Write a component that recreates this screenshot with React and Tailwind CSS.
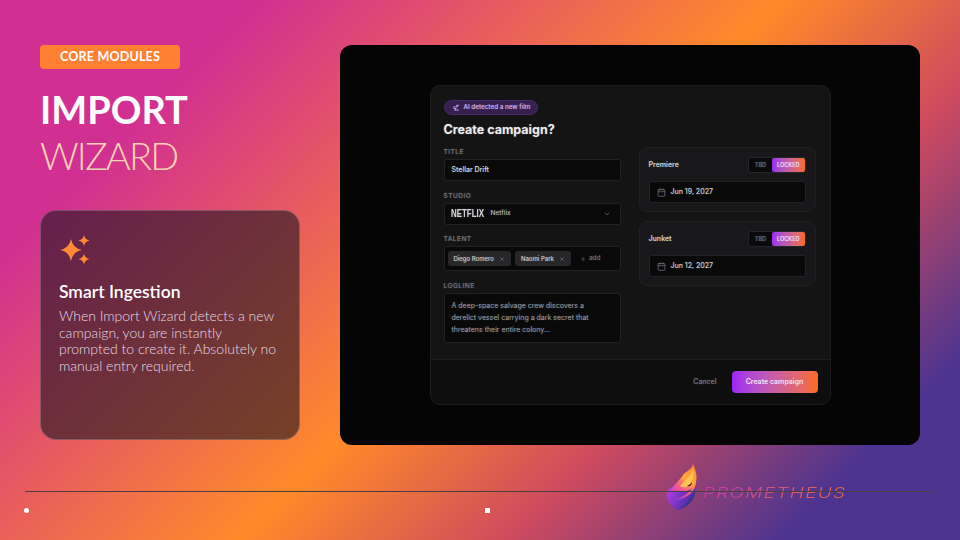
import React from 'react';
import { Calendar, ChevronDown, Plus, X } from 'lucide-react';

const Sparkle = ({ cx, cy, r }) => {
  const k = r * 0.16;
  return (
    <path
      d={`M${cx} ${cy - r}Q${cx + k} ${cy - k} ${cx + r} ${cy}Q${cx + k} ${cy + k} ${cx} ${cy + r}Q${cx - k} ${cy + k} ${cx - r} ${cy}Q${cx - k} ${cy - k} ${cx} ${cy - r}Z`}
    />
  );
};

const Field = ({ label, children }) => (
  <div className="flex flex-col gap-[3px]">
    <div className="text-[6.5px] leading-[8px] tracking-[0.5px] font-medium text-[#71717a]">{label}</div>
    {children}
  </div>
);

const Chip = ({ name }) => (
  <div className="flex items-center gap-[5px] h-[15px] px-[6px] rounded-[3px] bg-[#27272a] text-[6px] font-medium text-[#c8c8cc]">
    {name}
    <X size={6} className="text-[#8a8a90]" />
  </div>
);

const DateCard = ({ label, date }) => (
  <div className="flex flex-col gap-[8px] h-[65px] px-[9px] pt-[9px] rounded-[8px] border border-[#212124] bg-[#18181a]">
    <div className="flex items-center justify-between">
      <span className="text-[7px] font-semibold text-[#c8c8cc]">{label}</span>
      <div className="flex h-[16px] items-stretch rounded-[3px] border border-[#26262a] bg-[#0a0a0b] text-[5.5px] font-semibold">
        <span className="flex items-center px-[6px] text-[#5f5f66]">TBD</span>
        <span className="flex items-center px-[5px] text-[#f3d9f5] bg-gradient-to-r from-[#9a2bf0] to-[#fb6a12] rounded-[2px]">LOCKED</span>
      </div>
    </div>
    <div className="flex items-center gap-[5px] h-[22px] px-[7px] rounded-[3px] border border-[#222225] bg-[#09090a]">
      <Calendar size={9} className="text-[#71717a]" />
      <span className="text-[7px] font-medium text-[#c4c4c8]">{date}</span>
    </div>
  </div>
);

const Modal = () => (
  <div className="w-[401px] h-[320px] flex flex-col rounded-[10px] border border-[#1c1c1e] bg-[#141415] antialiased [text-shadow:0_0_1.5px_rgba(190,190,195,0.4)] overflow-hidden font-[Inter,sans-serif]">
    <div className="flex-1 flex flex-col pl-[13px] pr-[13px] pt-[14px]">
      <div className="self-start flex items-center gap-[4px] h-[15px] px-[7px] rounded-full bg-[#35204f] border border-[#46296a] text-[6.3px] font-medium text-[#d8b4fe]">
        <svg width="8" height="8" viewBox="0 0 24 24" fill="none" stroke="currentColor" strokeWidth="2.5"><path d="M4 14h8l-4 6M12 4h8l-6 6M3 9h12M9 18h12" /></svg>
        AI detected a new film
      </div>
      <div className="mt-[6px] text-[12.5px] leading-[18px] font-bold text-[#ececec]">Create campaign?</div>
      <div className="flex gap-[18px] mt-[9px]">
        <div className="w-[177px] flex flex-col gap-[10.5px]">
          <Field label="TITLE">
            <div className="flex items-center h-[22px] px-[7px] rounded-[3px] border border-[#222225] bg-[#09090a] text-[7px] font-medium text-[#d4d4d8]">Stellar Drift</div>
          </Field>
          <Field label="STUDIO">
            <div className="flex items-center justify-between h-[22px] px-[6px] rounded-[3px] border border-[#222225] bg-[#09090a]">
              <div className="flex items-center gap-[6px]">
                <span className="w-[34px] text-[11px] font-bold text-[#d4d4d8] scale-x-[0.72] origin-left whitespace-nowrap font-['Liberation_Sans',sans-serif]">NETFLIX</span>
                <span className="text-[6.5px] font-medium text-[#a8a8ae]">Netflix</span>
              </div>
              <ChevronDown size={8} className="text-[#71717a] mr-[3px]" />
            </div>
          </Field>
          <Field label="TALENT">
            <div className="flex items-center gap-[4px] h-[25px] px-[3px] rounded-[3px] border border-[#222225] bg-[#09090a]">
              <Chip name="Diego Romero" />
              <Chip name="Naomi Park" />
              <div className="flex items-center gap-[3px] ml-[5px] text-[6.5px] text-[#71717a]">
                <Plus size={6} />add
              </div>
            </div>
          </Field>
          <Field label="LOGLINE">
            <div className="h-[50px] pl-[7px] pr-[12px] pt-[6px] rounded-[3px] border border-[#222225] bg-[#09090a] text-[7px] leading-[12px] text-[#96969c]">
              A deep-space salvage crew discovers a derelict vessel carrying a dark secret that threatens their entire colony...
            </div>
          </Field>
        </div>
        <div className="w-[177px] flex flex-col gap-[9px] mt-[-1px]">
          <DateCard label="Premiere" date="Jun 19, 2027" />
          <DateCard label="Junket" date="Jun 12, 2027" />
        </div>
      </div>
    </div>
    <div className="h-[45px] flex items-center justify-end gap-[15px] px-[12px] border-t border-[#1e1e20] bg-[#0e0e0f]">
      <span className="text-[7px] font-medium text-[#6b6b72]">Cancel</span>
      <div className="flex items-center justify-center w-[86px] h-[22px] rounded-[4px] bg-gradient-to-r from-[#a021f5] to-[#fb6a12] text-[7px] font-semibold text-[#f3d9f5]">Create campaign</div>
    </div>
  </div>
);

const Logo = () => (
  <div className="flex items-start">
    <svg width="50" height="55" viewBox="0 0 50 55">
      <defs>
        <linearGradient id="flameTop" x1="0.8" y1="0" x2="0" y2="1">
          <stop offset="0" stopColor="#ff8a2e" />
          <stop offset="0.4" stopColor="#ffa83e" />
          <stop offset="0.7" stopColor="#f6588c" />
          <stop offset="1" stopColor="#c23cd8" />
        </linearGradient>
        <linearGradient id="flameBase" x1="0" y1="0" x2="1" y2="0.6">
          <stop offset="0" stopColor="#cc44ee" />
          <stop offset="0.6" stopColor="#7a35c8" />
          <stop offset="1" stopColor="#3f2f9c" />
        </linearGradient>
        <linearGradient id="flameMid" x1="1" y1="0" x2="0" y2="1">
          <stop offset="0" stopColor="#ff9a3c" />
          <stop offset="0.5" stopColor="#f0558c" />
          <stop offset="1" stopColor="#8a35c8" />
        </linearGradient>
      </defs>
      <path d="M18 50C9 46 5 38 7 32C10 26 18 24 24 17C30 22 36 20 35.5 26C35 36 28 46 18 50Z" fill="url(#flameBase)" />
      <path d="M9 32C14 25 20 20 23 15C27 10 32 10 33 4C37 13 38 20 34 27C27 34 16 30 9 32Z" fill="url(#flameTop)" />
      <path d="M20 26C26 20 31 15 33 9C35 15 33 22 28 26C25 28 22 27 20 26Z" fill="#ffc452" />
      <path d="M12 40C22 38 31 33 36 22C36 31 27 40 12 40Z" fill="url(#flameMid)" />
      <path d="M18 50C26 46 32 39 35 29C36 38 29 47 18 50Z" fill="#33348f" />
      <path d="M27 26C29 25 31 24 32 22C32 25 30 27 27 26Z" fill="#35182c" />
    </svg>
    <span className="mt-[26px] ml-[-7px] w-[112px] text-[15px] leading-[14px] italic font-light tracking-[1px] whitespace-nowrap scale-x-[1.27] origin-left bg-gradient-to-r from-[#c23aa8] to-[#e8653f] bg-clip-text text-transparent font-[Inter,sans-serif]">PROMETHEUS</span>
  </div>
);

export default function App() {
  return (
    <div className="relative w-[960px] h-[540px] overflow-hidden font-[Lato,sans-serif] bg-[linear-gradient(135deg,#d12f92_0%,#d12f92_17%,#ff8a2a_52%,#ce4a5e_70%,#4c3490_88%,#4c3490_100%)]">
      <div className="flex h-[445px] pt-[45px] pl-[40px] pr-[40px] justify-between">
        <div className="w-[260px] flex flex-col">
          <div className="flex items-center justify-center w-[140px] h-[24px] rounded-[4px] bg-[#ff8033] text-[12.5px] font-bold text-white tracking-[0.2px]">CORE MODULES</div>
          <div className="mt-[17px] text-[38px] leading-[46px] font-bold text-white">IMPORT</div>
          <div className="text-[38px] leading-[47px] font-light tracking-[-1.8px] text-[#fdd4b4]">WIZARD</div>
          <div className="mt-[31px] w-[260px] h-[230px] px-[18px] pt-[24px] rounded-[16px] border border-white/20 bg-[#1e1620]/60">
            <svg width="32" height="32" viewBox="0 0 32 32" fill="#ff8a33">
              <Sparkle cx={12} cy={15} r={11} />
              <Sparkle cx={25} cy={5.5} r={5.5} />
              <Sparkle cx={25} cy={24} r={5.5} />
            </svg>
            <div className="mt-[13px] text-[17.5px] leading-[24px] font-semibold text-white">Smart Ingestion</div>
            <div className="mt-[4px] text-[14px] leading-[16.7px] font-light text-[#e6dbe6]">When Import Wizard detects a new campaign, you are instantly prompted to create it. Absolutely no manual entry required.</div>
          </div>
        </div>
        <div className="w-[580px] h-[400px] flex items-center justify-center rounded-[12px] bg-[#050505]">
          <Modal />
        </div>
      </div>
      {/* footer logo, rule and slide markers */}
      <div className="absolute left-[660px] top-[460px]"><Logo /></div>
      <div className="absolute left-[25px] right-[24px] top-[491px] h-px bg-[#4a3f40]" />
      <div className="absolute left-[24px] top-[508px] w-[5px] h-[5px] rounded-full bg-white" />
      <div className="absolute left-[485px] top-[508px] w-[5px] h-[5px] bg-white" />
    </div>
  );
}
